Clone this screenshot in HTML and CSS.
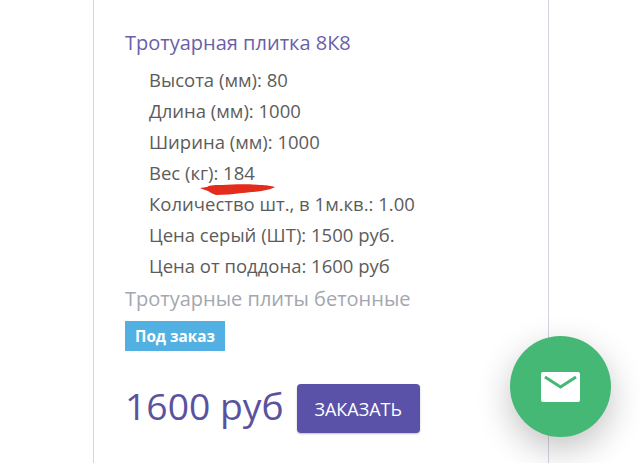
FILE: index.html

```html
<!DOCTYPE html>
<html>
<head>
    <title>Тротуарная плитка 8К8</title>
    <link rel="stylesheet" href="styles.css">
</head>
<body>
    <div class="card">
        <h2 class="title">Тротуарная плитка 8К8</h2>
        <ul class="specs">
            <li>Высота (мм): 80</li>
            <li>Длина (мм): 1000</li>
            <li>Ширина (мм): 1000</li>
            <li class="marked">Вес (кг): 184
                <svg class="scribble" width="76" height="12" viewBox="0 0 76 12">
                    <path d="M0 5 L7 4 C10 2 16 2 22 2 C36 1 50 1 60 2 C66 2 72 3 75 4 C72 6 66 7 62 8 C54 9 50 9 42 10 C34 11 24 12 16 12 C12 11 10 9 8 8 C5 7 2 6 0 5 Z" fill="#e42c1c"/>
                </svg>
            </li>
            <li>Количество шт., в 1м.кв.: 1.00</li>
            <li>Цена серый (ШТ): 1500 руб.</li>
            <li>Цена от поддона: 1600 руб</li>
        </ul>
        <div class="category">Тротуарные плиты бетонные</div>
        <span class="badge">Под заказ</span>
        <div class="buy">
            <span class="price">1600 руб</span>
            <button type="button" class="order">ЗАКАЗАТЬ</button>
        </div>
    </div>
    <div class="fab">
        <svg width="39" height="30" viewBox="0 0 39 30">
            <path d="M2 0 H37 Q39 0 39 2 V28 Q39 30 37 30 H2 Q0 30 0 28 V2 Q0 0 2 0 Z" fill="#fff"/>
            <path d="M4 5 L19.5 15 L35 5" fill="none" stroke="#44b874" stroke-width="3"/>
        </svg>
    </div>
</body>
</html>
```

FILE: styles.css

```css
body {
    margin: 0;
    height: 463px;
    overflow: hidden;
    background: #fff;
    font-family: "Open Sans", sans-serif;
    position: relative;
}

.card {
    box-sizing: border-box;
    width: 456px;
    height: 463px;
    margin-left: 93px;
    padding: 30px 0 0 31px;
    border-left: 1px solid #d3d5e0;
    border-right: 1px solid #d3d5e0;
}

.title {
    margin: 0;
    font-size: 20px;
    font-weight: 400;
    line-height: 26px;
    color: #6a5fa8;
}

.specs {
    list-style: none;
    margin: 8px 0 0;
    padding: 0 0 0 24px;
    font-size: 18.5px;
    line-height: 31px;
    color: #5c5c5c;
}

.marked {
    position: relative;
}

.scribble {
    position: absolute;
    left: 51px;
    top: 26px;
}

.category {
    margin-top: 5px;
    font-size: 20px;
    line-height: 26px;
    color: #a3a7b0;
}

.badge {
    display: inline-block;
    margin-top: 9px;
    padding: 0 10px;
    font-size: 15.3px;
    font-weight: 700;
    line-height: 30px;
    color: #fff;
    background: #52b1e2;
}

.buy {
    display: flex;
    align-items: center;
    gap: 13px;
    margin-top: 33px;
}

.price {
    margin-top: -5px;
    font-size: 37.3px;
    line-height: 48px;
    color: #5a52a0;
}

.order {
    width: 123px;
    height: 49px;
    border: 0;
    border-radius: 4px;
    background: #5a52a8;
    color: #fff;
    font-family: inherit;
    font-size: 18px;
    box-shadow: 0 1px 2px rgba(0, 0, 0, 0.25);
}

.fab {
    position: absolute;
    left: 510px;
    top: 336px;
    width: 101px;
    height: 101px;
    border-radius: 50%;
    background: #44b874;
    display: flex;
    align-items: center;
    justify-content: center;
    box-shadow: 0 12px 34px rgba(0, 0, 0, 0.24);
}
```
